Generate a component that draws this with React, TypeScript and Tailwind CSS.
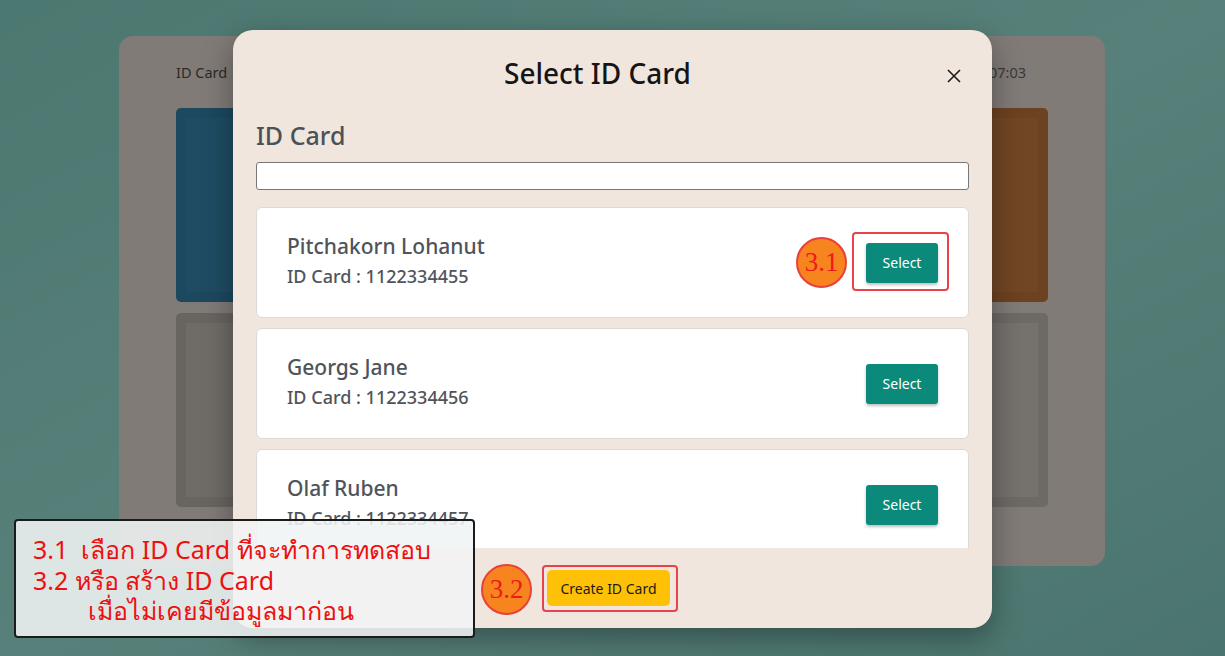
import React from 'react';

interface Person {
  name: string;
  idCard: string;
}

const people: Person[] = [
  { name: 'Pitchakorn Lohanut', idCard: '1122334455' },
  { name: 'Georgs Jane', idCard: '1122334456' },
  { name: 'Olaf Ruben', idCard: '1122334457' },
];

const tiles = [
  'bg-[#1f4c63] border-[#1c4860]',
  'bg-[#6f6b67] border-[#6a6662]',
  'bg-[#6f6b67] border-[#6a6662]',
  'bg-[#714624] border-[#6c4220]',
  'bg-[#6f6b67] border-[#686460]',
  'bg-[#6f6b67] border-[#686460]',
  'bg-[#6f6b67] border-[#686460]',
  'bg-[#75716d] border-[#6d6965]',
];

const Badge: React.FC<{ label: string; className: string }> = ({ label, className }) => (
  <div
    className={`absolute w-[51px] h-[51px] rounded-full bg-[#f7841f] border-2 border-[#e8403a] flex items-center justify-center text-[27px] text-[#ee1b1b] ${className}`}
    style={{ fontFamily: '"Liberation Serif", serif' }}
  >
    {label}
  </div>
);

const PersonCard: React.FC<{ person: Person }> = ({ person }) => (
  <div className="h-[111px] shrink-0 bg-white border border-[#dcdad6] rounded-[6px] pl-[30px] pr-[30px] flex items-center justify-between">
    <div className="text-[#50545a] -mt-[4px]">
      <p className="text-[21px] leading-[30px] font-medium">{person.name}</p>
      <p className="text-[18px] leading-[27px] mt-[2px] font-medium">ID Card : {person.idCard}</p>
    </div>
    <button className="w-[72px] h-[40px] bg-[#0b8a7b] text-white text-[14px] rounded-[3px] shadow-[0_2px_3px_rgba(0,0,0,0.25)]">
      Select
    </button>
  </div>
);

export default function App() {
  return (
    <div
      className="relative w-[1225px] h-[656px] overflow-hidden bg-gradient-to-br from-[#4b7870] via-[#58807a] to-[#4a756e]"
      style={{ fontFamily: '"Noto Sans", "Open Sans", sans-serif' }}
    >
      {/* page behind the dialog, dimmed */}
      <div className="absolute left-[119px] top-[36px] w-[986px] h-[530px] rounded-[14px] bg-[#807b77] px-[57px] pt-[26px]">
        <div className="flex justify-between text-[14.5px] leading-[20px] text-[#2c2a28]">
          <span>ID Card</span>
          <span className="pr-[22px] text-[#3a3835]">07:03</span>
        </div>
        <div className="grid grid-cols-4 gap-x-[16px] gap-y-[11px] mt-[26px]">
          {tiles.map((t, i) => (
            <div key={i} className={`h-[194px] rounded-[5px] border-[10px] ${t}`} />
          ))}
        </div>
      </div>

      {/* dialog */}
      <div className="absolute left-[233px] top-[30px] w-[759px] h-[598px] rounded-[20px] bg-[#f0e6dd] shadow-[0_10px_30px_rgba(0,0,0,0.35)] flex flex-col overflow-hidden">
        <div className="relative h-[89px] shrink-0 flex items-center justify-center pr-[30px]">
          <h1 className="text-[28px] font-medium text-[#151515] -mt-[4px]">Select ID Card</h1>
          <svg className="absolute right-[31px] top-[39px]" width="14" height="14" viewBox="0 0 14 14" fill="none" stroke="#1a1a1a" strokeWidth="1.6">
            <path d="M1 1 L13 13 M13 1 L1 13" />
          </svg>
        </div>
        <div className="px-[23px] flex-1 flex flex-col min-h-0">
          <p className="text-[25px] leading-[32px] font-medium text-[#4c5157]">ID Card</p>
          <input className="mt-[11px] h-[28px] shrink-0 bg-white border border-[#777] rounded-[3px]" />
          <div className="mt-[17px] flex-1 min-h-0 overflow-hidden flex flex-col gap-[10px]">
            {people.map((p) => (
              <PersonCard key={p.idCard} person={p} />
            ))}
          </div>
        </div>
        <div className="h-[80px] shrink-0 flex items-center justify-center">
          <button className="w-[123px] h-[36px] bg-[#ffc107] text-[#1a1a1a] text-[14px] rounded-[5px] mr-[8px]">
            Create ID Card
          </button>
        </div>
      </div>

      {/* annotations */}
      <div className="absolute left-[852px] top-[232px] w-[97px] h-[59px] border-2 border-[#e8434a] rounded-[4px]" />
      <Badge label="3.1" className="left-[796px] top-[237px]" />
      <div className="absolute left-[542px] top-[565px] w-[136px] h-[47px] border-2 border-[#e8434a] rounded-[4px]" />
      <Badge label="3.2" className="left-[481px] top-[564px]" />

      <div className="absolute left-[14px] top-[519px] w-[461px] h-[119px] border-2 border-[#1b1b1b] rounded-[4px] bg-[rgba(240,244,244,0.88)] pl-[17px] pt-[13px] text-[#ee1010] text-[25px] leading-[30.5px] whitespace-nowrap">
        <p>3.1&nbsp; เลือก ID Card ที่จะทำการทดสอบ</p>
        <p>3.2 หรือ สร้าง ID Card</p>
        <p className="pl-[55px]">เมื่อไม่เคยมีข้อมูลมาก่อน</p>
      </div>
    </div>
  );
}
